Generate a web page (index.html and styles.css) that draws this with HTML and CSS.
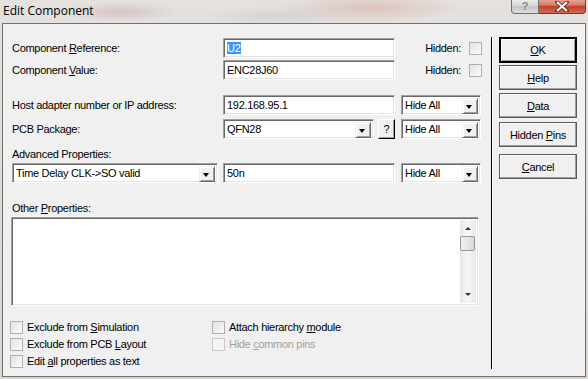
FILE: index.html
```html
<!DOCTYPE html>
<html lang="en">
<head>
    <meta charset="UTF-8">
    <title>Edit Component</title>
    <link rel="stylesheet" href="styles.css">
</head>
<body>
    <div class="window">
        <div class="titlebar">
            <span class="title">Edit Component</span>
            <div class="caption">
                <span class="cap-help">?</span>
                <span class="cap-close">
                    <svg width="14" height="11" viewBox="0 0 14 11">
                        <path d="M2 1 L12 10 M12 1 L2 10" stroke="#5a2a22" stroke-width="3.6" stroke-linecap="square"/>
                        <path d="M2 1 L12 10 M12 1 L2 10" stroke="#fff" stroke-width="2"/>
                    </svg>
                </span>
            </div>
        </div>

        <div class="client">
            <div class="form">
                <div class="row row-ref">
                    <label class="label">Component <u>R</u>eference:</label>
                    <div class="field"><span class="selected">U2</span></div>
                    <div class="hidden-opt">Hidden: <span class="check"></span></div>
                </div>
                <div class="row row-value">
                    <label class="label">Component <u>V</u>alue:</label>
                    <div class="field">ENC28J60</div>
                    <div class="hidden-opt">Hidden: <span class="check"></span></div>
                </div>
                <div class="row row-host">
                    <label class="label">Host adapter number or IP address:</label>
                    <div class="field">192.168.95.1</div>
                    <div class="combo hide-combo">Hide All<span class="arrow"></span></div>
                </div>
                <div class="row row-pcb">
                    <label class="label">PCB Package:</label>
                    <div class="combo pcb-combo">QFN28<span class="arrow"></span></div>
                    <button class="small-btn">?</button>
                    <div class="combo hide-combo">Hide All<span class="arrow"></span></div>
                </div>
                <div class="caption-label adv-label">Advanced Properties:</div>
                <div class="row row-adv">
                    <div class="combo adv-combo">Time Delay CLK-&gt;SO valid<span class="arrow"></span></div>
                    <div class="field">50n</div>
                    <div class="combo hide-combo">Hide All<span class="arrow"></span></div>
                </div>
                <div class="caption-label other-label">Other <u>P</u>roperties:</div>
                <div class="memo">
                    <div class="memo-text"></div>
                    <div class="scrollbar">
                        <span class="sb-up"></span>
                        <span class="sb-thumb"></span>
                        <span class="sb-down"></span>
                    </div>
                </div>
                <div class="options">
                    <div class="opt"><span class="check"></span><span>Exclude from <u>S</u>imulation</span></div>
                    <div class="opt"><span class="check"></span><span>Attach hierarchy <u>m</u>odule</span></div>
                    <div class="opt"><span class="check"></span><span>Exclude from PCB <u>L</u>ayout</span></div>
                    <div class="opt disabled"><span class="check"></span><span>Hide <u>c</u>ommon pins</span></div>
                    <div class="opt"><span class="check"></span><span>Edit <u>a</u>ll properties as text</span></div>
                </div>
            </div>

            <div class="divider"></div>

            <div class="actions">
                <button class="btn btn-default"><u>O</u>K</button>
                <button class="btn btn-help"><u>H</u>elp</button>
                <button class="btn btn-data"><u>D</u>ata</button>
                <button class="btn btn-pins">Hidden <u>P</u>ins</button>
                <button class="btn btn-cancel"><u>C</u>ancel</button>
            </div>
        </div>
    </div>
</body>
</html>
```

FILE: styles.css
```css
body {
    margin: 0;
    font-family: "Liberation Sans", Arial, sans-serif;
    font-size: 11px;
    letter-spacing: -0.3px;
    color: #000;
}
u {
    text-decoration: underline;
    text-underline-offset: 1px;
}
.window {
    width: 588px;
    height: 379px;
    overflow: hidden;
    background-color: #dedad6;
    background-image:
        radial-gradient(ellipse 90px 14px at 370px 8px, rgba(214, 170, 160, 0.55), transparent),
        radial-gradient(ellipse 60px 10px at 120px 12px, rgba(190, 160, 160, 0.4), transparent),
        radial-gradient(ellipse 80px 10px at 280px 16px, rgba(200, 200, 200, 0.5), transparent),
        linear-gradient(180deg, #e4e1de, #d8d4d0);
}
.titlebar {
    height: 23px;
    display: flex;
    justify-content: space-between;
    align-items: flex-start;
}
.title {
    font-family: "Open Sans", "Noto Sans", sans-serif;
    font-size: 12px;
    letter-spacing: 0;
    padding: 2px 0 0 3px;
    line-height: 17px;
}
.caption {
    display: flex;
    margin-right: 2px;
    margin-top: -1px;
}
.cap-help {
    width: 28px;
    height: 15px;
    box-sizing: border-box;
    border: 1px solid #6f6f6f;
    border-top: none;
    border-radius: 0 0 0 4px;
    background: linear-gradient(180deg, #eeeeee, #d6d6d6 50%, #c4c4c4 51%, #dcdcdc);
    font-size: 11px;
    font-weight: bold;
    color: #888;
    text-align: center;
    line-height: 14px;
}
.cap-close {
    width: 47px;
    height: 15px;
    box-sizing: border-box;
    border: 1px solid #6b3a30;
    border-top: none;
    border-left: none;
    border-radius: 0 0 4px 0;
    background: linear-gradient(180deg, #e9a99b, #d47a66 45%, #c2402b 52%, #d26b55);
    display: flex;
    justify-content: center;
    align-items: center;
}
.client {
    margin-left: 2px;
    width: 584px;
    height: 354px;
    box-sizing: border-box;
    border: 1px solid #707070;
    background: #f0f0f0;
    display: flex;
}
.form {
    width: 479px;
    padding: 14px 0 0 9px;
}
.row {
    display: flex;
    align-items: center;
    height: 20px;
}
.row-value { margin-top: 2px; }
.row-host { margin-top: 15px; }
.row-pcb { margin-top: 4px; }
.row-adv { margin-top: 2px; }
.label {
    width: 211px;
    flex: none;
}
.field, .combo {
    position: relative;
    height: 20px;
    box-sizing: border-box;
    background: #fff;
    border: 1px solid;
    border-color: #a0a0a0 #fff #fff #a0a0a0;
    box-shadow: inset 1px 1px #696969, inset -1px -1px #e3e3e3;
    padding: 3px 0 0 3px;
    line-height: 13px;
    flex: none;
}
.field { width: 172px; }
.selected {
    background: #3399ff;
    color: #fff;
    padding-right: 1px;
}
.hidden-opt {
    width: 87px;
    display: flex;
    justify-content: flex-end;
    align-items: center;
    gap: 8px;
}
.check {
    width: 13px;
    height: 13px;
    box-sizing: border-box;
    border: 1px solid #b0b0b0;
    background: linear-gradient(135deg, #e2e2e2, #fbfbfb);
    flex: none;
}
.hidden-opt .check { margin-top: 1px; }
.hide-combo {
    width: 80px;
    margin-left: 6px;
}
.pcb-combo { width: 151px; }
.adv-combo { width: 206px; margin-right: 5px; }
.arrow {
    position: absolute;
    right: 2px;
    top: 2px;
    width: 16px;
    height: 16px;
    box-sizing: border-box;
    background: #f0f0f0;
    border: 1px solid;
    border-color: #f0f0f0 #696969 #696969 #f0f0f0;
    box-shadow: inset 1px 1px #fff, inset -1px -1px #a0a0a0;
}
.arrow::after {
    content: "";
    position: absolute;
    left: 3px;
    top: 6px;
    border-left: 3.5px solid transparent;
    border-right: 3.5px solid transparent;
    border-top: 4px solid #000;
}
.small-btn {
    width: 17px;
    height: 20px;
    margin-left: 4px;
    padding: 0;
    box-sizing: border-box;
    font-family: inherit;
    font-size: 11px;
    background: #f0f0f0;
    border: 1px solid;
    border-color: #fff #000 #000 #fff;
    box-shadow: inset -1px -1px #a0a0a0;
}
.caption-label {
    height: 14px;
    line-height: 14px;
}
.adv-label { margin-top: 8px; }
.other-label { margin-top: 18px; }
.memo {
    margin: 2px 0 0 -1px;
    width: 468px;
    height: 89px;
    box-sizing: border-box;
    background: #fff;
    border: 1px solid;
    border-color: #a0a0a0 #fff #fff #a0a0a0;
    box-shadow: inset 1px 1px #696969, inset -1px -1px #e3e3e3;
    display: flex;
    justify-content: flex-end;
    padding: 2px 2px 2px 0;
}
.scrollbar {
    position: relative;
    width: 16px;
    background: linear-gradient(90deg, #e8e8e8, #f4f4f4 40%, #f4f4f4 60%, #e8e8e8);
}
.sb-up, .sb-down {
    position: absolute;
    left: 5px;
    border-left: 3px solid transparent;
    border-right: 3px solid transparent;
}
.sb-up {
    top: 7px;
    border-bottom: 3px solid #333;
}
.sb-down {
    bottom: 7px;
    border-top: 3px solid #333;
}
.sb-thumb {
    position: absolute;
    left: 0;
    top: 16px;
    width: 15px;
    height: 15px;
    box-sizing: border-box;
    border: 1px solid #979797;
    border-radius: 2px;
    background: linear-gradient(90deg, #f2f2f2, #e6e6e6 50%, #d8d8d8);
}
.options {
    margin: 15px 0 0 -2px;
    display: grid;
    grid-template-columns: 202px auto;
    grid-auto-rows: 17px;
}
.opt {
    display: flex;
    align-items: center;
    gap: 4px;
    height: 13px;
    line-height: 13px;
}
.opt.disabled { color: #a0a0a0; }
.opt.disabled .check {
    background: #f4f4f4;
    border-color: #c8c8c8;
}
.divider {
    width: 1px;
    height: 332px;
    margin-top: 13px;
    background: #000;
    box-shadow: 1px 0 #fff;
}
.actions {
    display: flex;
    flex-direction: column;
    padding: 13px 0 0 7px;
}
.btn {
    width: 78px;
    height: 25px;
    padding: 0;
    font-family: inherit;
    font-size: 11px;
    letter-spacing: -0.3px;
    color: #000;
    background: #f0f0f0;
    border: 1px solid;
    border-color: #fff #404040 #404040 #fff;
    outline: 1px solid #5a5a5a;
    outline-offset: -1px;
    box-shadow: inset -1px -1px #a0a0a0, inset 1px 1px #fff;
}
.btn-default {
    height: 26px;
    border: 2px solid #000;
    outline: none;
    box-shadow: inset 1px 1px #fff, inset -1px -1px #a0a0a0;
}
.btn-help { margin-top: 2px; }
.btn-data { margin-top: 3px; }
.btn-pins { margin-top: 4px; }
.btn-cancel { margin-top: 7px; }
```
